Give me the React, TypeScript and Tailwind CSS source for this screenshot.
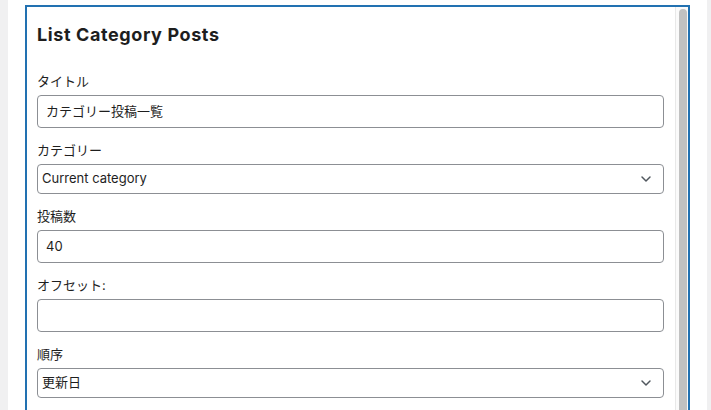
import { ChevronDown } from 'lucide-react'

const font = { fontFamily: 'Inter, "Noto Sans CJK JP", sans-serif' }

function Label({ children }: { children: React.ReactNode }) {
  return <div className="mt-[13px] mb-[5px] text-[13px] leading-[18px] text-[#1e1e1e]">{children}</div>
}

function TextInput({ value }: { value: string }) {
  return (
    <div className="h-[33px] rounded-[4px] border border-[#8c8f94] bg-white px-2 flex items-center text-[13px] text-[#1e1e1e]">
      {value}
    </div>
  )
}

function Select({ value }: { value: string }) {
  return (
    <div className="h-[30px] rounded-[4px] border border-[#8c8f94] bg-white pl-1 pr-[9px] flex items-center justify-between text-[13px] text-[#1e1e1e]">
      <span>{value}</span>
      <ChevronDown className="w-[16px] h-[16px] text-[#50575e]" strokeWidth={2.2} />
    </div>
  )
}

export default function App() {
  return (
    <div className="h-[410px] w-[711px] overflow-hidden bg-[#f0f0f1] flex" style={font}>
      <div className="ml-2 w-[699px] bg-white pl-[17px] pt-[5px]">
        <div className="w-[665px] h-[420px] border-2 border-[#2271b1] flex">
          <div className="flex-1 pl-[10px] pr-[11px] pt-[16px]">
            <h2 className="text-[18px] leading-[24px] font-bold tracking-[0.6px] text-[#1e1e1e]">List Category Posts</h2>
            <div className="h-[12px]" />
            <Label>タイトル</Label>
            <TextInput value="カテゴリー投稿一覧" />
            <Label>カテゴリー</Label>
            <Select value="Current category" />
            <Label>投稿数</Label>
            <TextInput value="40" />
            <Label>オフセット:</Label>
            <TextInput value="" />
            <Label>順序</Label>
            <Select value="更新日" />
          </div>
          <div className="w-[13px] border-l border-[#e8e8e8] bg-[#fafafa] pl-[3px] pt-[2px]">
            <div className="w-[8px] h-[420px] rounded-full bg-[#c1c1c1]" />
          </div>
        </div>
      </div>
    </div>
  )
}
